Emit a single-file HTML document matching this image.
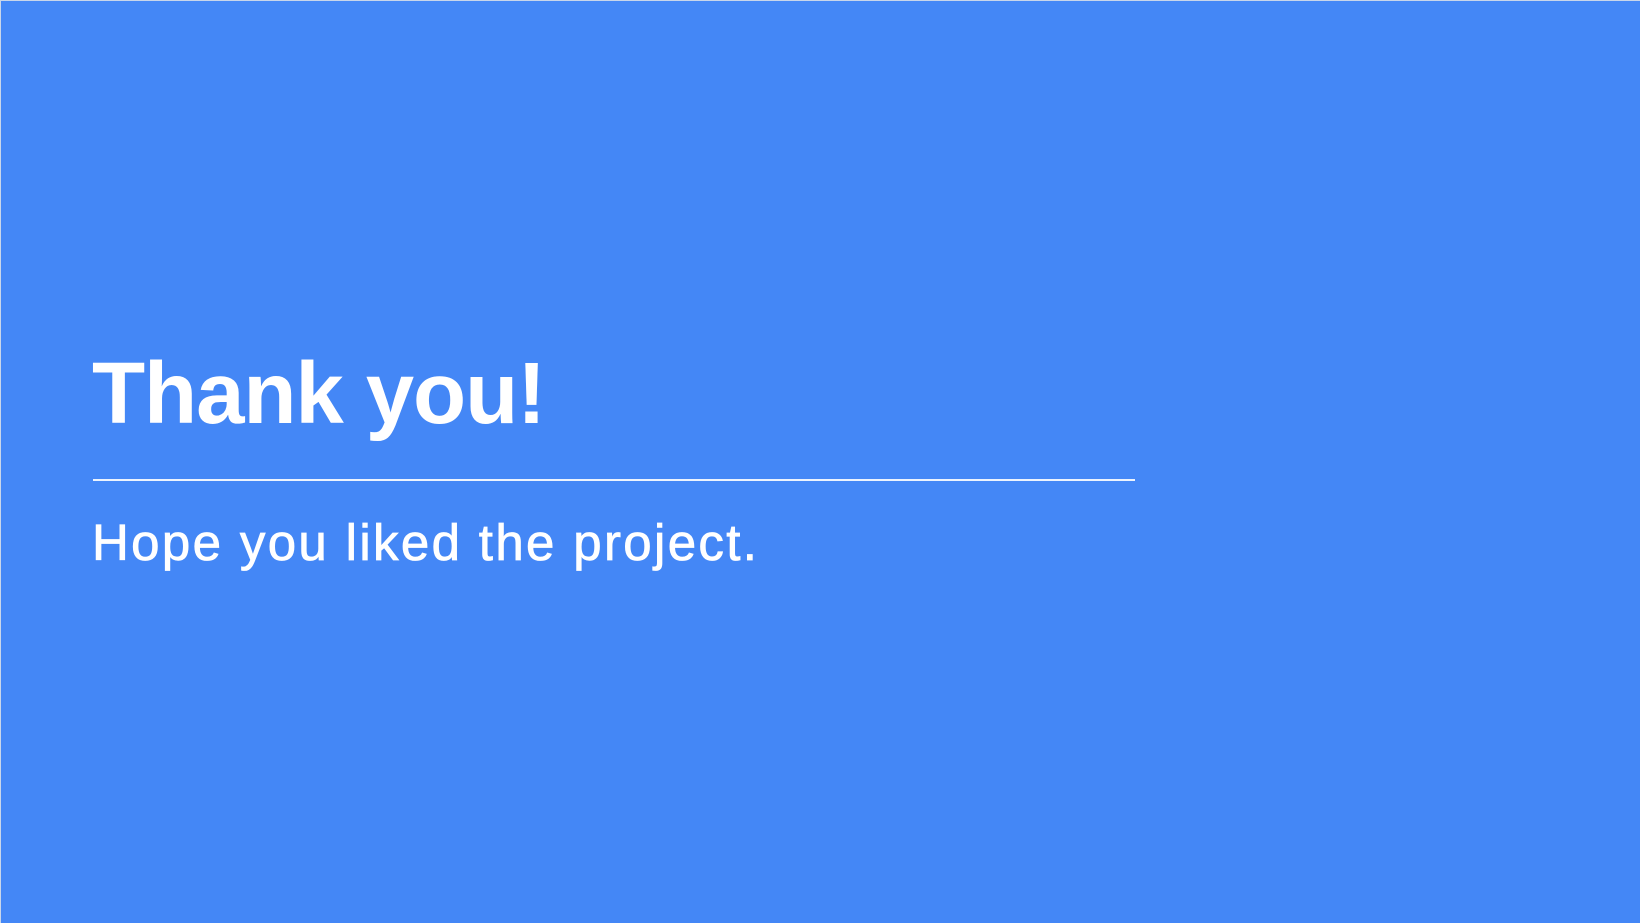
<!DOCTYPE html>
<html><head><meta charset="utf-8"><style>
html,body{margin:0;padding:0;}
body{width:1640px;height:923px;background:#4487f6;position:relative;overflow:hidden;font-family:"Liberation Sans",sans-serif;color:#fff;}
.edge{position:absolute;left:0;top:0;width:1640px;height:1px;background:#c9d6ea;}
.edgel{position:absolute;left:0;top:0;width:1px;height:923px;background:#c9d6ea;}
.t{position:absolute;left:92px;top:344px;font-size:87px;font-weight:bold;line-height:100px;white-space:nowrap;letter-spacing:-1.1px;}
.line{position:absolute;left:93px;top:479px;width:1042px;height:2px;background:#fff;opacity:.9;}
.s{position:absolute;left:92px;top:513px;font-size:51px;line-height:60px;white-space:nowrap;letter-spacing:2.35px;-webkit-text-stroke:0.8px #fff;}
</style></head><body>
<div class="edge"></div><div class="edgel"></div>
<div class="t">Thank you!</div>
<div class="line"></div>
<div class="s">Hope you liked the project.</div>
</body></html>
